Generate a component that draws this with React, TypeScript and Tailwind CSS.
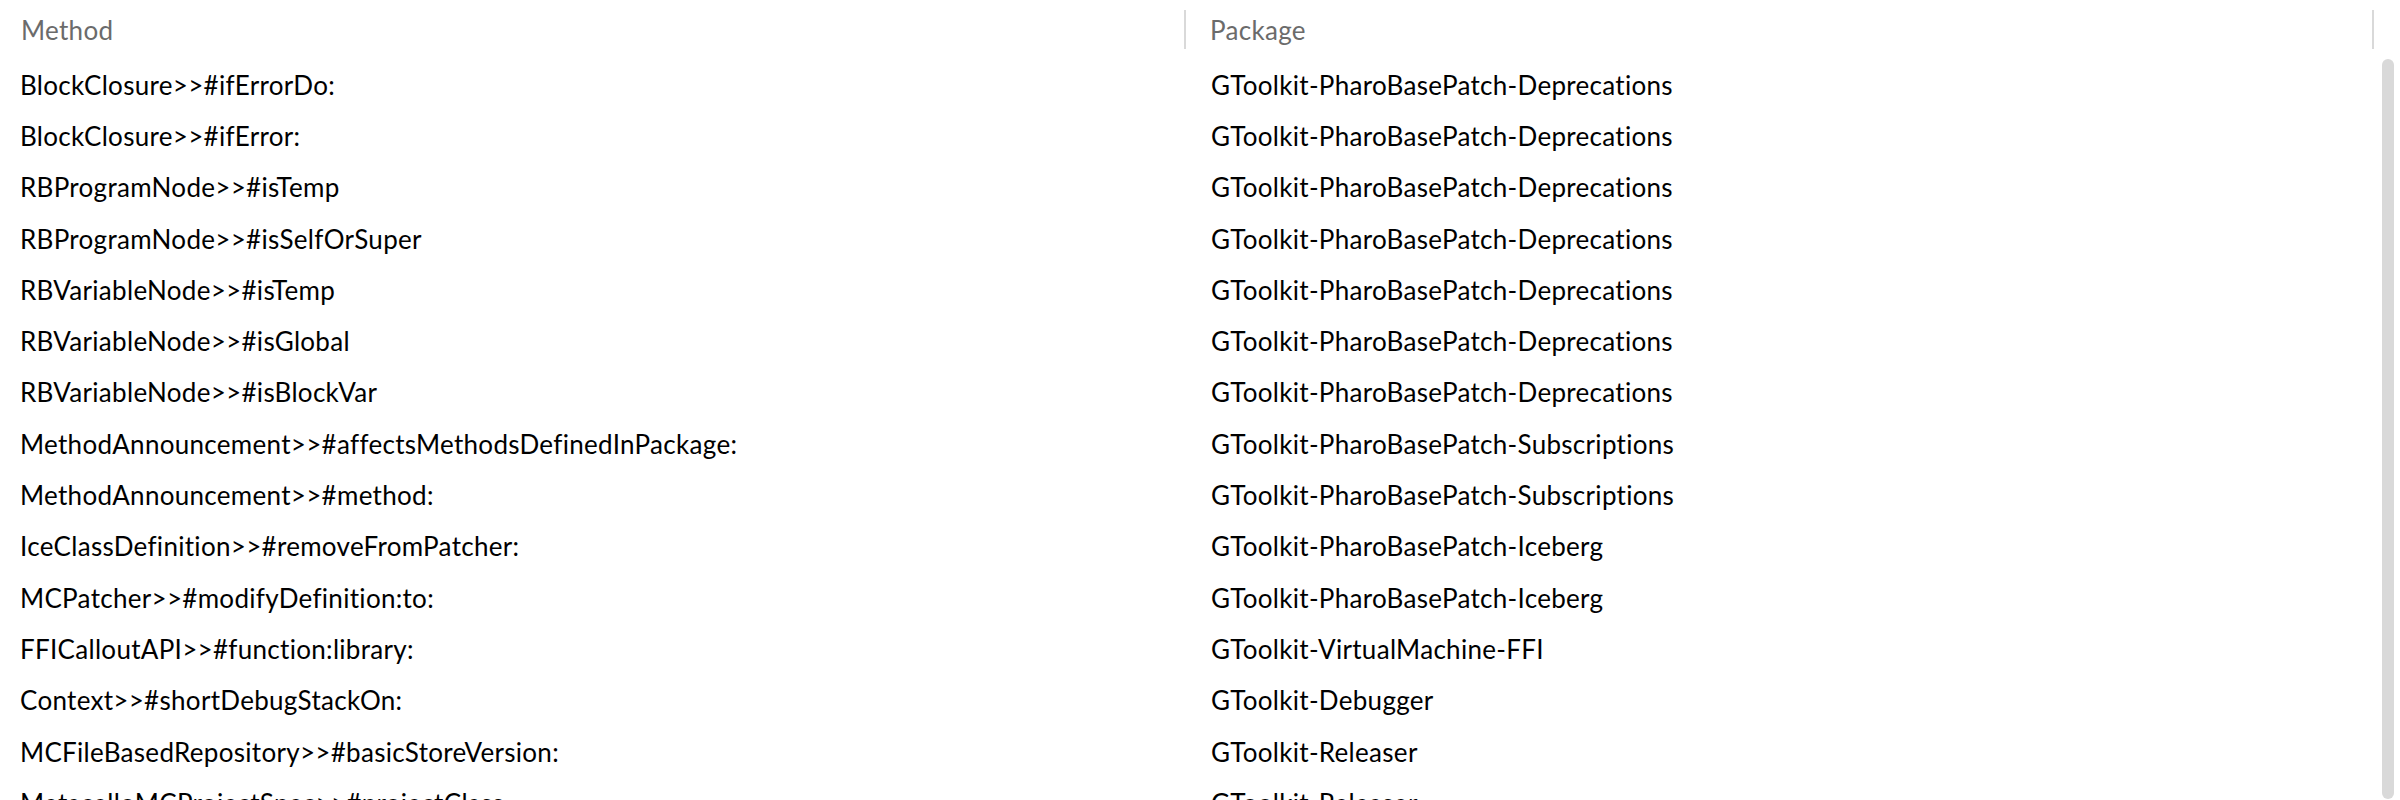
import React from "react";

/*
Method / Package list
- Two column table of patched methods and the package that owns them
- Thin header dividers, grey scroll thumb on the right
*/

type Row = {
  method: string;
  pkg: string;
};

const rows: Row[] = [
  { method: "BlockClosure>>#ifErrorDo:", pkg: "GToolkit-PharoBasePatch-Deprecations" },
  { method: "BlockClosure>>#ifError:", pkg: "GToolkit-PharoBasePatch-Deprecations" },
  { method: "RBProgramNode>>#isTemp", pkg: "GToolkit-PharoBasePatch-Deprecations" },
  { method: "RBProgramNode>>#isSelfOrSuper", pkg: "GToolkit-PharoBasePatch-Deprecations" },
  { method: "RBVariableNode>>#isTemp", pkg: "GToolkit-PharoBasePatch-Deprecations" },
  { method: "RBVariableNode>>#isGlobal", pkg: "GToolkit-PharoBasePatch-Deprecations" },
  { method: "RBVariableNode>>#isBlockVar", pkg: "GToolkit-PharoBasePatch-Deprecations" },
  { method: "MethodAnnouncement>>#affectsMethodsDefinedInPackage:", pkg: "GToolkit-PharoBasePatch-Subscriptions" },
  { method: "MethodAnnouncement>>#method:", pkg: "GToolkit-PharoBasePatch-Subscriptions" },
  { method: "IceClassDefinition>>#removeFromPatcher:", pkg: "GToolkit-PharoBasePatch-Iceberg" },
  { method: "MCPatcher>>#modifyDefinition:to:", pkg: "GToolkit-PharoBasePatch-Iceberg" },
  { method: "FFICalloutAPI>>#function:library:", pkg: "GToolkit-VirtualMachine-FFI" },
  { method: "Context>>#shortDebugStackOn:", pkg: "GToolkit-Debugger" },
  { method: "MCFileBasedRepository>>#basicStoreVersion:", pkg: "GToolkit-Releaser" },
  { method: "MetacelloMCProjectSpec>>#projectClass", pkg: "GToolkit-Releaser" },
];

const HeaderCell = ({ label, first }: { label: string; first?: boolean }) => (
  <div className="flex items-center h-[59px]">
    <span
      className={`flex-1 text-[#6b6b6b] ${first ? "pl-[21px]" : "pl-[23px]"}`}
    >
      {label}
    </span>
    <div className="w-[2px] h-[39px] bg-[#d9d9d9] mr-[1px]"></div>
  </div>
);

const App = () => {
  return (
    <div
      className="h-[800px] w-[2400px] overflow-hidden bg-white flex flex-col text-[26px] leading-none tracking-[0.3px] text-black [font-variant-ligatures:none]"
      style={{ fontFamily: "Lato, 'Noto Sans', sans-serif" }}
    >
      <div className="grid grid-cols-[1187px_1188px]">
        <HeaderCell label="Method" first />
        <HeaderCell label="Package" />
      </div>

      <div className="flex flex-1 min-h-0">
        <div className="w-[2375px] overflow-hidden">
          {rows.map((row) => (
            <div
              key={row.method}
              className="grid grid-cols-[1187px_1188px] h-[51.3px] items-center"
            >
              <span className="pl-[20px] whitespace-nowrap">{row.method}</span>
              <span className="pl-[24px] whitespace-nowrap">{row.pkg}</span>
            </div>
          ))}
        </div>
        <div className="flex-1 flex justify-center pl-[1px] pb-[1px]">
          <div className="w-[12px] h-full bg-[#d9d9d9] rounded-full"></div>
        </div>
      </div>
    </div>
  );
};

export default App;
